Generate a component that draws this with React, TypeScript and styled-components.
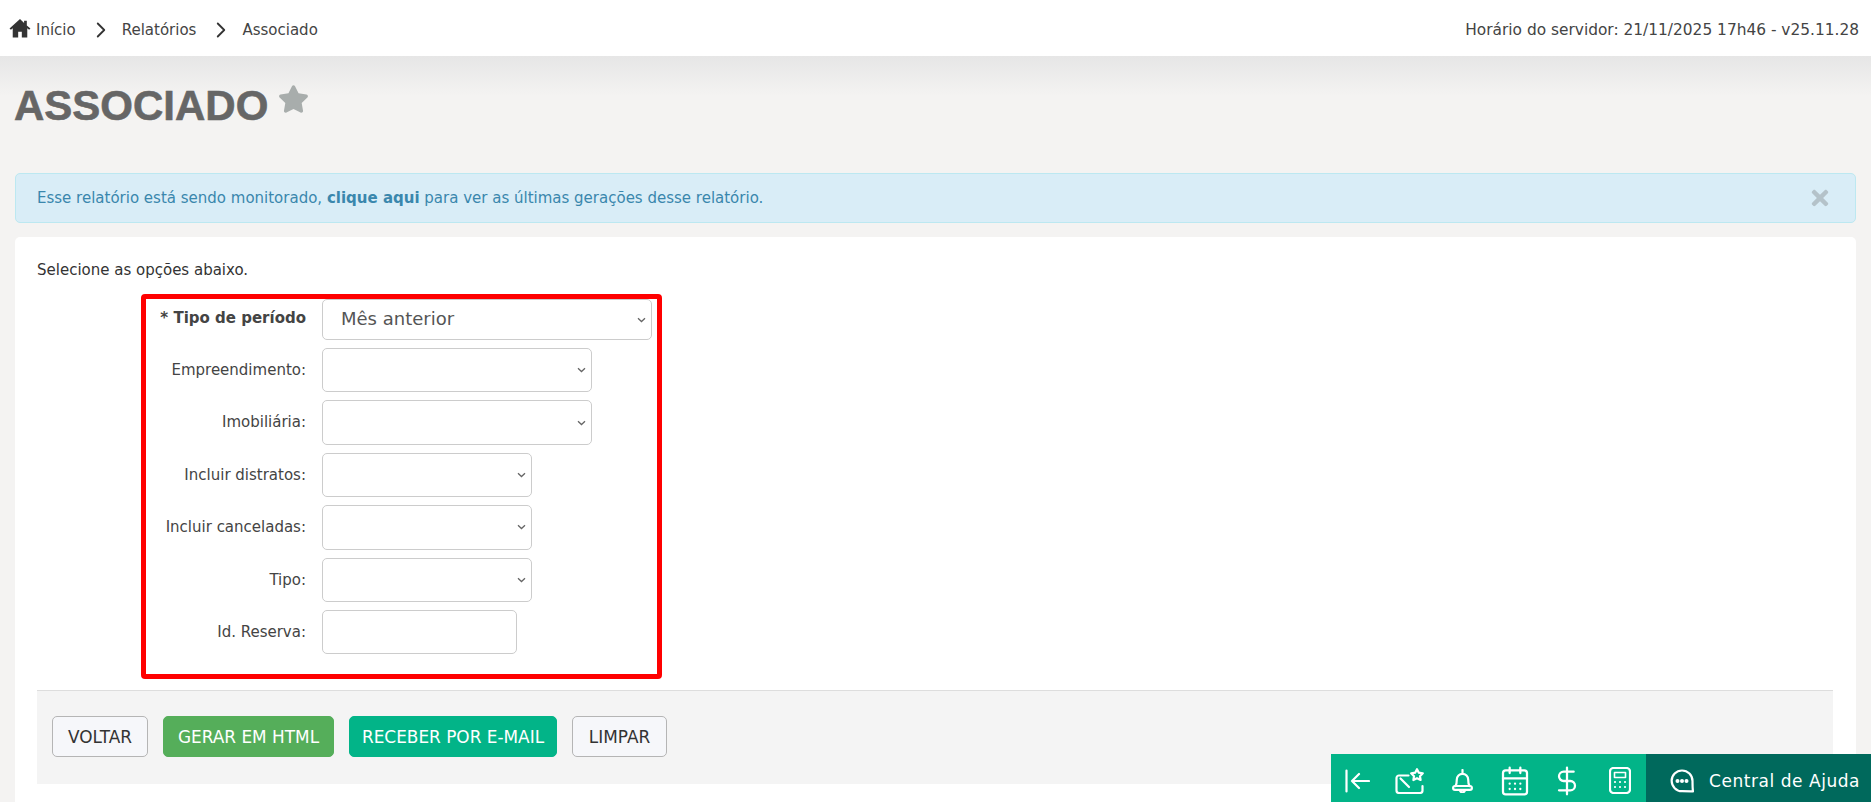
import React from "react";
import styled, { createGlobalStyle } from "styled-components";
import { FaStar, FaTimes } from "react-icons/fa";
import { CalendarDays, ChevronRight, DollarSign } from "lucide-react";

const uiFont = `"DejaVu Sans", Verdana, sans-serif`;

const chevron = `url("data:image/svg+xml,%3Csvg xmlns='http://www.w3.org/2000/svg' width='9' height='6' viewBox='0 0 9 6'%3E%3Cpath d='M1 1.200l3.500 3.300L8 1.200' fill='none' stroke='%23666' stroke-width='1.300'/%3E%3C/svg%3E")`;

const GlobalStyle = createGlobalStyle`
  html, body {
    margin: 0;
    padding: 0;
    height: 100%;
    overflow: hidden;
    background: #f4f3f2;
    font-family: ${uiFont};
    color: #333;
  }
  * { box-sizing: border-box; }
`;

const Page = styled.div`
  position: relative;
  height: 802px;
  overflow: hidden;
  background: linear-gradient(#e6e6e6 0, #f4f3f2 40px) no-repeat 0 56px;
`;

const TopBar = styled.header`
  height: 56px;
  background: #fff;
  display: flex;
  align-items: center;
  justify-content: space-between;
  padding: 3px 12px 0 9px;
  color: #444;
`;

const Crumbs = styled.nav`
  display: flex;
  align-items: center;
  font-size: 15px;
`;

const Crumb = styled.span`
  display: inline-flex;
  align-items: center;
`;

const Separator = styled(ChevronRight)`
  width: 26px;
  height: 26px;
  margin: 0 8px 0 12px;
  color: #333;
  stroke-width: 1.700;
`;

const HomeSvg = styled.svg`
  width: 22px;
  height: 20px;
  margin: -4px 5px 0 0;
  color: #333;
`;

const ServerTime = styled.span`
  font-size: 15.4px;
`;

const Content = styled.main`
  padding: 0 15px;
`;

const TitleRow = styled.div`
  display: flex;
  align-items: flex-start;
  height: 117px;
  padding-top: 26px;
`;

const Title = styled.h1`
  margin: 0 0 0 -1px;
  font-family: "Liberation Sans", Arial, sans-serif;
  font-weight: 700;
  font-size: 42px;
  line-height: 47px;
  color: #666;
  -webkit-text-stroke: 0.6px #666;
`;

const StarIcon = styled(FaStar)`
  width: 31px;
  height: 28px;
  margin: 3px 0 0 10px;
  color: #a8adac;
`;

const Alert = styled.div`
  display: flex;
  align-items: center;
  justify-content: space-between;
  height: 50px;
  padding: 0 23px 0 21px;
  background: #d9edf7;
  border: 1px solid #bce8f1;
  border-radius: 5px;
  font-size: 15px;
  color: #3a87ad;
`;

const CloseIcon = styled(FaTimes)`
  width: 24px;
  height: 24px;
  color: #b4c2c9;
`;

const Card = styled.section`
  margin-top: 14px;
  height: 580px;
  padding: 24px 23px 0 22px;
  background: #fff;
  border-radius: 5px;
`;

const Intro = styled.p`
  margin: 0;
  font-size: 15px;
  line-height: 18px;
  color: #333;
`;

const FormBox = styled.div`
  width: 521px;
  height: 385px;
  margin: 15px 0 11px 104px;
  border: 5px solid #f00;
  border-radius: 4px;
  display: grid;
  grid-template-columns: 160px auto;
  grid-auto-rows: min-content;
  align-content: start;
  row-gap: 8px;
  column-gap: 16px;
`;

const Label = styled.label<{ $strong?: boolean }>`
  text-align: right;
  font-size: 15px;
  font-weight: ${(p) => (p.$strong ? 700 : 400)};
  color: #444;
  padding-top: ${(p) => (p.$strong ? "10px" : "13px")};
`;

const Select = styled.select<{ $width: number; $large?: boolean }>`
  display: block;
  width: ${(p) => p.$width}px;
  height: ${(p) => (p.$large ? "41px" : "44.4px")};
  padding: 0 0 ${(p) => (p.$large ? "2px" : "0")} ${(p) => (p.$large ? "18px" : "8px")};
  appearance: none;
  background: #fff ${chevron} no-repeat right 5px center;
  border: 1px solid #ccc;
  border-radius: 5px;
  font-family: ${uiFont};
  font-size: ${(p) => (p.$large ? "18px" : "15px")};
  color: #555;
`;

const TextInput = styled.input`
  display: block;
  width: 195px;
  height: 44.4px;
  padding: 0 8px;
  border: 1px solid #ccc;
  border-radius: 5px;
  font-family: ${uiFont};
`;

const Footer = styled.div`
  height: 94px;
  display: flex;
  align-items: flex-start;
  gap: 15px;
  padding: 25px 15px 0;
  background: #f4f4f4;
  border-top: 1px solid #ddd;
`;

const Button = styled.button<{ $width: number; $variant?: "success" | "teal" }>`
  width: ${(p) => p.$width}px;
  height: 41px;
  padding: 0;
  border-radius: 5px;
  font-family: ${uiFont};
  font-size: 16.9px;
  text-transform: uppercase;
  color: ${(p) => (p.$variant ? "#fff" : "#333")};
  background: ${(p) =>
    p.$variant === "success" ? "#55ae5a" : p.$variant === "teal" ? "#02b488" : "#f6f7fa"};
  border: 1px solid
    ${(p) => (p.$variant === "success" ? "#55ae5a" : p.$variant === "teal" ? "#02b488" : "#b5b5b5")};
`;

const Dock = styled.div`
  position: absolute;
  right: 0;
  bottom: 0;
  width: 540px;
  height: 48px;
  display: flex;
  color: #fff;
`;

const DockIcons = styled.div`
  width: 315px;
  padding-top: 5px;
  background: #02b488;
  display: grid;
  grid-template-columns: repeat(6, 1fr);
  align-items: center;
  justify-items: center;
`;

const LucideCell = styled.span`
  display: flex;
  svg {
    width: 32px;
    height: 32px;
    stroke-width: 1.700;
  }
`;

const HelpButton = styled.div`
  flex: 1;
  background: #00695c;
  display: flex;
  align-items: center;
  gap: 15px;
  padding: 5px 0 0 24px;
  font-size: 17px;
  letter-spacing: 0.55px;
`;

const HomeIcon = () => (
  <HomeSvg viewBox="0 0 24 22">
    <path
      fill="currentColor"
      d="M12 1 0.500 11.500 2 13l2-1.800V21.500h6V15h4v6.500h6V11.200l2 1.800 1.500-1.500L19.500 8.300V3h-3v2.500z"
    />
  </HomeSvg>
);

const CollapseIcon = () => (
  <svg width="25" height="24" viewBox="0 0 25 24" fill="none" stroke="currentColor" strokeWidth="2.200" strokeLinecap="round" strokeLinejoin="round">
    <path d="M1.500 1.500v21M7 12h17M14 5l-7 7 7 7" />
  </svg>
);

const MailStarIcon = () => (
  <svg width="29" height="26" viewBox="0 0 29 26" fill="none" stroke="currentColor" strokeWidth="2.200" strokeLinecap="round" strokeLinejoin="round">
    <path d="M13.500 7.500H4a2.500 2.500 0 0 0-2.500 2.500v12.500A2.500 2.500 0 0 0 4 25h21a2.500 2.500 0 0 0 2.500-2.500V18" />
    <path d="M5.500 10.500l8.500 8.500" />
    <path d="M22 1.200l1.800 3.500 4 .6-2.800 2.900.6 3.800-3.600-1.800-3.600 1.800.6-3.800-2.800-2.900 4-.6z" />
  </svg>
);

const BellIcon = () => (
  <svg width="21" height="24" viewBox="0 0 21 24" fill="none" stroke="currentColor" strokeWidth="2.200" strokeLinecap="round" strokeLinejoin="round">
    <path d="M10.500 1v2.500" />
    <path d="M3.500 17c1-1.500 1.300-3 1.300-6.500a5.700 5.700 0 0 1 11.400 0c0 3.500.3 5 1.300 6.500" />
    <path d="M3 17h15a1.800 1.800 0 0 1 0 3.800H3A1.800 1.800 0 0 1 3 17z" />
    <path d="M8 21a2.500 2.300 0 0 0 5 0" />
  </svg>
);

const CalculatorIcon = () => (
  <svg width="22" height="27" viewBox="0 0 22 27" fill="none" stroke="currentColor" strokeWidth="2.200" strokeLinecap="round" strokeLinejoin="round">
    <rect x="1" y="1" width="20" height="25" rx="3.500" />
    <rect x="5.500" y="5.500" width="11" height="5" strokeWidth="1.600" />
    <path d="M6 15h.01M11 15h.01M16 15h.01M6 20h.01M11 20h.01M16 20h.01" />
  </svg>
);

const ChatIcon = () => (
  <svg width="24" height="24" viewBox="0 0 24 24" fill="none" stroke="currentColor" strokeWidth="2.200" strokeLinejoin="round">
    <path d="M12 1.500a10.500 10.500 0 0 1 10.500 10.500c0 3.500 0 7 .5 10.500-3.500-.3-7-.3-11-.3A10.300 10.300 0 1 1 12 1.500z" />
    <circle cx="7.500" cy="12" r="2" fill="currentColor" stroke="none" />
    <circle cx="12" cy="12" r="2" fill="currentColor" stroke="none" />
    <circle cx="16.500" cy="12" r="2" fill="currentColor" stroke="none" />
  </svg>
);

const fields = [
  { label: "Empreendimento:", width: 270 },
  { label: "Imobiliária:", width: 270 },
  { label: "Incluir distratos:", width: 210 },
  { label: "Incluir canceladas:", width: 210 },
  { label: "Tipo:", width: 210 },
];

const App = () => {
  return (
    <Page>
      <GlobalStyle />
      <TopBar>
        <Crumbs>
          <Crumb>
            <HomeIcon />
            Início
          </Crumb>
          <Separator />
          <Crumb>Relatórios</Crumb>
          <Separator />
          <Crumb>Associado</Crumb>
        </Crumbs>
        <ServerTime>Horário do servidor: 21/11/2025 17h46 - v25.11.28</ServerTime>
      </TopBar>
      <Content>
        <TitleRow>
          <Title>ASSOCIADO</Title>
          <StarIcon />
        </TitleRow>
        <Alert>
          <span>
            Esse relatório está sendo monitorado, <b>clique aqui</b> para ver as últimas gerações desse relatório.
          </span>
          <CloseIcon />
        </Alert>
        <Card>
          <Intro>Selecione as opções abaixo.</Intro>
          <FormBox>
            <Label $strong>* Tipo de período</Label>
            <Select $width={330} $large defaultValue="anterior">
              <option value="anterior">Mês anterior</option>
            </Select>
            {fields.map((field) => (
              <React.Fragment key={field.label}>
                <Label>{field.label}</Label>
                <Select $width={field.width}>
                  <option></option>
                </Select>
              </React.Fragment>
            ))}
            <Label>Id. Reserva:</Label>
            <TextInput />
          </FormBox>
          <Footer>
            <Button $width={96}>Voltar</Button>
            <Button $width={171} $variant="success">Gerar em HTML</Button>
            <Button $width={208} $variant="teal">Receber por e-mail</Button>
            <Button $width={95}>Limpar</Button>
          </Footer>
        </Card>
      </Content>
      <Dock>
        <DockIcons>
          <CollapseIcon />
          <MailStarIcon />
          <BellIcon />
          <LucideCell>
            <CalendarDays />
          </LucideCell>
          <LucideCell>
            <DollarSign />
          </LucideCell>
          <CalculatorIcon />
        </DockIcons>
        <HelpButton>
          <ChatIcon />
          Central de Ajuda
        </HelpButton>
      </Dock>
    </Page>
  );
};

export default App;
